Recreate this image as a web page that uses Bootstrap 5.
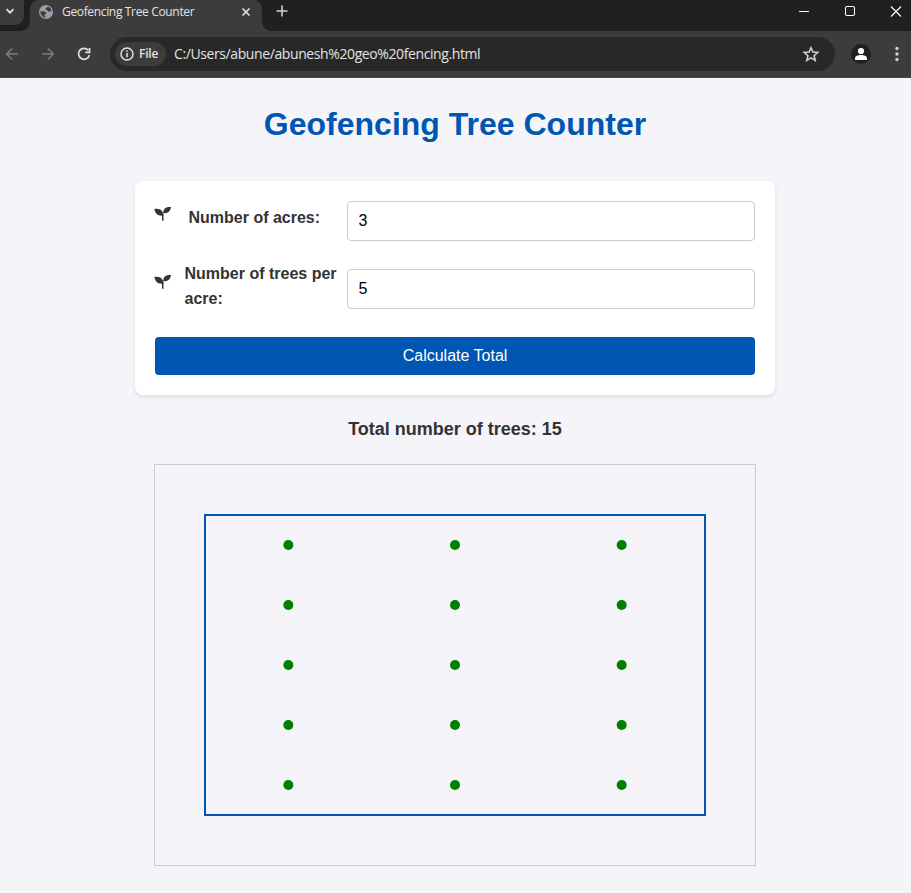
<!DOCTYPE html>
<html lang="en">
<head>
<meta charset="utf-8">
<title>Geofencing Tree Counter</title>
<link href="https://cdn.jsdelivr.net/npm/bootstrap@5.3.0/dist/css/bootstrap.min.css" rel="stylesheet">
<style>
body{background:#f4f4f9;color:#333;font-family:"Liberation Sans",Arial,sans-serif;font-size:16px;line-height:25.6px;height:893px;overflow:hidden}
svg{display:block;flex:none}
.chrome-ui{font-family:"Open Sans","Noto Sans",sans-serif;color:#e3e3e3;line-height:16px}
.tabstrip{height:31px;background:#1f2120}
.tab-menu{width:24px;height:25px;background:#3c3c3c;border-radius:0 0 9px 0;margin-right:6px}
.tab-now{width:232px;height:31px;background:#3c3c3c;border-radius:9px 9px 0 0;padding:0 9px 8px 9px}
.tab-now::before,.tab-now::after{content:"";position:absolute;bottom:0;width:9px;height:9px}
.tab-now::before{left:-9px;background:radial-gradient(circle at 0 0,transparent 8.5px,#3c3c3c 9px)}
.tab-now::after{right:-9px;background:radial-gradient(circle at 100% 0,transparent 8.5px,#3c3c3c 9px)}
.tab-title{font-size:12px;letter-spacing:-.34px;margin-left:9px;padding-top:1px}
.toolbar{height:47px;background:#3c3c3c;border-bottom:1px solid #474747}
.omnibox{width:725px;height:34px;background:#282828;border-radius:17px;padding:0 5px}
.file-chip{height:24px;width:51px;border-radius:12px;background:#3c3c3c;font-size:12px;padding-left:5px;font-weight:600;letter-spacing:-.2px}
.file-chip span{margin-left:5px}
.address{font-size:14px;margin-left:8px;letter-spacing:-.4px}
.bookmark{margin-right:9px}
.avatar{width:20px;height:20px;background:#1f2120}
.page{padding-right:1px}
h1.page-title{font-size:32px;font-weight:700;color:#0056b3;line-height:51px;margin:21px 0 31px}
.form-card{width:640px;height:214px;padding:20px;border-radius:8px;box-shadow:0 2px 4px rgba(0,0,0,.1)}
.field-row{height:40px;margin-bottom:28px}
.sprout{margin-top:5px}
.field-label{font-weight:700;width:162px;line-height:25px;margin-left:13.500px}
.label-single{padding:4px 0 0 4px}
.label-double{margin-top:-8px}
.num-input{width:408px;height:40px;border:1px solid #ccc;border-radius:4px;padding:0 10.500px;color:#000;font-size:16px}
.calc-btn{height:38px;background:#0056b3;border:0;border-radius:4px;font-size:16px;line-height:38px;padding:0}
.total{font-size:18px;font-weight:700;line-height:29px;margin:20px 0}
.map-frame{width:602px;height:402px;border:1px solid #ccc}
</style>
</head>
<body>
<header class="chrome-ui">
 <div class="tabstrip d-flex">
  <div class="tab-menu d-flex"><svg width="24" height="25" fill="none" stroke="#e3e3e3" stroke-width="1.7"><path d="M6.500 9.200l3.500 3.500 3.500-3.500"/></svg></div>
  <div class="tab-now position-relative d-flex align-items-center">
   <svg width="14" height="14" viewBox="0 0 14 14"><circle cx="7" cy="7" r="7" fill="#9aa0a6"/><path d="M1.400 6.200h3.800l2.300 1.700-.3 1.400H5.600v2.500h1.600v.9C3.600 12.600 1 9.800 1.400 6.200zM8.800 1.600c-.2 1.500-2.300 1-2.300 2.300 0 1.100.9.900 1.700 1.300.7.400.4 1.500 1.600 1.500.9 0 1.300-.5 2.800-.3C12.300 4 11 2.200 8.800 1.600z" fill="#3c3c3c"/></svg>
   <span class="tab-title text-nowrap">Geofencing Tree Counter</span>
   <svg class="ms-auto" width="14" height="14" stroke="#e3e3e3" stroke-width="1.6"><path d="M3.500 3.500l7 7m0-7l-7 7"/></svg>
  </div>
  <svg class="ms-2" width="24" height="24" stroke="#d0d0d0" stroke-width="1.6"><path d="M6.500 11h11M12 5.500v11"/></svg>
  <svg class="ms-auto" width="121" height="24" fill="none" stroke="#fff" stroke-width="1.1"><path d="M9 11.500h10M101 6.500l10 10m0-10l-10 10"/><rect x="55.500" y="6.500" width="9" height="9" rx="1.5"/></svg>
 </div>
 <div class="toolbar d-flex align-items-center">
  <svg width="110" height="46" fill="none" stroke="#7c7c7c" stroke-width="1.6"><path d="M18 23H7M12.200 17.500L6.700 23l5.500 5.500M42 23h11M47.800 17.500l5.500 5.500-5.500 5.500"/><path d="M88.300 19.300A5.500 5.500 0 1 0 89.400 24M89.600 17v4.300H85.300" stroke="#dedede" stroke-width="1.7"/></svg>
  <div class="omnibox d-flex align-items-center">
   <div class="file-chip d-flex align-items-center"><svg width="14" height="14" fill="none" stroke="#e3e3e3" stroke-width="1.5"><circle cx="7" cy="7" r="6"/><path d="M7 6v4.200M7 3.500v1.500"/></svg><span>File</span></div>
   <span class="address text-nowrap">C:/Users/abune/abunesh%20geo%20fencing.html</span>
   <svg class="bookmark ms-auto" width="20" height="20" viewBox="0 0 20 20" fill="none" stroke="#d0d0d0" stroke-width="1.6"><path d="M10 3.700l1.900 4.400 4.800.4-3.600 3.200 1.100 4.700-4.200-2.500-4.200 2.500 1.100-4.700-3.600-3.200 4.800-.4z"/></svg>
  </div>
  <div class="avatar rounded-circle ms-3"><svg width="20" height="20" fill="#fff"><circle cx="10" cy="7" r="3.1"/><path d="M4 16v-1.700C4 12.100 7 11 10 11s6 1.100 6 3.300V16z"/></svg></div>
  <svg class="ms-auto" width="28" height="20" fill="#d0d0d0"><circle cx="14" cy="4.500" r="1.7"/><circle cx="14" cy="10" r="1.7"/><circle cx="14" cy="15.500" r="1.7"/></svg>
 </div>
</header>
<main class="page d-flex flex-column align-items-center">
 <h1 class="page-title">Geofencing Tree Counter</h1>
 <form class="form-card bg-white">
  <div class="field-row d-flex">
   <svg class="sprout" width="16" height="16" viewBox="0 0 16 16" overflow="visible"><use href="#sprout"/></svg>
   <label class="field-label label-single" for="acres">Number of acres:</label>
   <input class="num-input ms-auto" id="acres" value="3">
  </div>
  <div class="field-row d-flex">
   <svg class="sprout" width="16" height="16" viewBox="0 0 16 16" overflow="visible"><g id="sprout" fill="#333"><path d="M-.6 3C2.500 2.300 5.500 3 7 5c1 1.300 1.200 2.800 1.100 4.700C5.500 10 3 9.500 1.500 7.800.3 6.400-.2 5 -.6 3zM8.200 7.300C8.200 5 8.800 3.200 10.500 2 12 1 14 .8 16 1c-.4 2-.9 3.800-2.500 5C12 7.200 10 7.500 8.200 7.300z"/><path d="M7 7.500h1.500v7.200H7z"/></g></svg>
   <label class="field-label label-double" for="trees">Number of trees per acre:</label>
   <input class="num-input ms-auto" id="trees" value="5">
  </div>
  <button type="button" class="calc-btn btn btn-primary w-100">Calculate Total</button>
 </form>
 <p class="total">Total number of trees: 15</p>
 <div class="map-frame"><svg width="600" height="400"><rect x="50" y="50" width="500" height="300" fill="none" stroke="#0056b3" stroke-width="2"/><g id="trees-dots" fill="green"></g></svg></div>
</main>
<script src="https://cdn.jsdelivr.net/npm/bootstrap@5.3.0/dist/js/bootstrap.bundle.min.js"></script>
<script>
// One dot per tree: a column for each acre, a row for each tree.
const dots = document.getElementById('trees-dots');
const acres = 3, perAcre = 5;
for (let a = 0; a < acres; a++) for (let t = 0; t < perAcre; t++) {
  const c = document.createElementNS('http://www.w3.org/2000/svg', 'circle');
  c.setAttribute('cx', 50 + (a + .5) * 500 / acres);
  c.setAttribute('cy', 50 + (t + .5) * 300 / perAcre);
  c.setAttribute('r', 5);
  dots.appendChild(c);
}
</script>
</body>
</html>
